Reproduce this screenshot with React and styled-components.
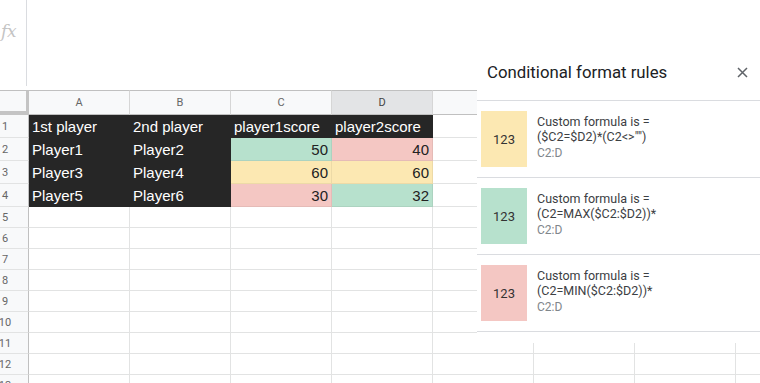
import React from "react";
import styled, { createGlobalStyle } from "styled-components";

const Global = createGlobalStyle`
  html, body { margin: 0; padding: 0; background: #fff; overflow: hidden; }
  body { width: 760px; height: 383px; font-family: "Liberation Sans", Arial, sans-serif; }
`;

const Page = styled.div`
  position: relative;
  width: 760px;
  height: 383px;
  overflow: hidden;
`;

const FormulaBar = styled.div`
  display: flex;
  height: 90px;
  margin-left: -18px;
`;

const FxBox = styled.div`
  width: 45px;
  height: 86px;
  border-right: 1px solid #dadce0;
  display: flex;
  align-items: flex-start;
  justify-content: flex-end;
  padding: 21px 10px 0 0;
  box-sizing: border-box;
  font-family: "DejaVu Serif", "Liberation Serif", serif;
  font-style: italic;
  font-size: 17px;
  color: #c4c4c4;
  letter-spacing: -0.5px;
`;

const Sheet = styled.div`
  display: grid;
  grid-template-columns: 47px repeat(8, 101px);
  grid-template-rows: 25px repeat(4, 23px) repeat(9, 21px);
  margin-left: -18px;
`;

const Corner = styled.div`
  box-sizing: border-box;
  background: #f8f9fa;
  border-top: 1px solid #c0c0c0;
  border-right: 4px solid #c4c4c4;
  border-bottom: 4px solid #c4c4c4;
  margin-right: -1px;
`;

const ColHead = styled.div`
  box-sizing: border-box;
  background: ${(p) => (p.$selected ? "#e3e4e6" : "#f8f9fa")};
  color: ${(p) => (p.$selected ? "#444" : "#666")};
  border-top: 1px solid #c0c0c0;
  border-bottom: 1px solid #c0c0c0;
  border-right: 1px solid #d6d6d6;
  font-family: Roboto, "Liberation Sans", sans-serif;
  font-size: 11px;
  display: flex;
  align-items: center;
  justify-content: center;
`;

const RowHead = styled.div`
  box-sizing: border-box;
  background: #f8f9fa;
  color: #666;
  border-right: 1px solid #c0c0c0;
  border-bottom: 1px solid #e2e3e3;
  font-family: Roboto, "Liberation Sans", sans-serif;
  font-size: 11px;
  display: flex;
  align-items: center;
  justify-content: center;
`;

const fills = {
  dark: "#262626",
  green: "#b7e1cd",
  yellow: "#fce8b2",
  red: "#f4c7c3",
};

const Cell = styled.div`
  box-sizing: border-box;
  background: ${(p) => (p.$fill ? fills[p.$fill] : "#fff")};
  color: ${(p) => (p.$fill === "dark" ? "#fff" : "#222")};
  border-right: 1px solid
    ${(p) => (p.$fill === "dark" ? fills.dark : p.$fill ? "rgba(0,0,0,0.06)" : "#e2e3e3")};
  border-bottom: 1px solid
    ${(p) => (p.$fill === "dark" ? fills.dark : p.$fill ? "rgba(0,0,0,0.06)" : "#e2e3e3")};
  font-family: "Liberation Sans", Arial, sans-serif;
  font-size: 15px;
  display: flex;
  align-items: flex-end;
  justify-content: ${(p) => (p.$num ? "flex-end" : "flex-start")};
  padding: 0 3px 2px 3px;
  white-space: nowrap;
  overflow: hidden;
`;

const Panel = styled.div`
  position: absolute;
  left: 477px;
  top: 50px;
  width: 283px;
  height: 293px;
  background: #fff;
  font-family: Roboto, "Liberation Sans", sans-serif;
`;

const PanelHeader = styled.div`
  box-sizing: border-box;
  height: 51px;
  border-bottom: 1px solid #dadce0;
  display: flex;
  align-items: center;
  justify-content: space-between;
  padding: 0 12px 6px 10px;
`;

const PanelTitle = styled.div`
  font-size: 16.8px;
  color: #202124;
`;

const CloseButton = styled.button`
  border: 0;
  background: none;
  padding: 0;
  width: 12px;
  height: 12px;
  display: flex;
  align-items: center;
  justify-content: center;
  cursor: pointer;
`;

const Rule = styled.div`
  box-sizing: border-box;
  height: 77px;
  border-bottom: 1px solid #dadce0;
  display: flex;
  align-items: flex-start;
  gap: 10px;
  padding: 10px 4px;
`;

const Swatch = styled.div`
  width: 46px;
  height: 56px;
  flex: none;
  background: ${(p) => fills[p.$fill]};
  color: #333;
  font-size: 13px;
  display: flex;
  align-items: center;
  justify-content: center;
`;

const RuleText = styled.div`
  display: flex;
  flex-direction: column;
  padding-top: 3px;
`;

const RuleLine = styled.div`
  font-size: 12.5px;
  line-height: 15px;
  color: #3c4043;
  white-space: nowrap;
`;

const RuleRange = styled.div`
  font-size: 12px;
  line-height: 13px;
  margin-top: 3px;
  color: #80868b;
`;

const cols = ["A", "B", "C", "D", "E", "F", "G", "H"];

const data = [
  [
    { v: "1st player", f: "dark" },
    { v: "2nd player", f: "dark" },
    { v: "player1score", f: "dark" },
    { v: "player2score", f: "dark" },
  ],
  [
    { v: "Player1", f: "dark" },
    { v: "Player2", f: "dark" },
    { v: "50", f: "green", n: true },
    { v: "40", f: "red", n: true },
  ],
  [
    { v: "Player3", f: "dark" },
    { v: "Player4", f: "dark" },
    { v: "60", f: "yellow", n: true },
    { v: "60", f: "yellow", n: true },
  ],
  [
    { v: "Player5", f: "dark" },
    { v: "Player6", f: "dark" },
    { v: "30", f: "red", n: true },
    { v: "32", f: "green", n: true },
  ],
];

const rules = [
  { fill: "yellow", formula: '($C2=$D2)*(C2<>"")' },
  { fill: "green", formula: "(C2=MAX($C2:$D2))*" },
  { fill: "red", formula: "(C2=MIN($C2:$D2))*" },
];

export default function App() {
  const rows = [];
  for (let r = 0; r < 13; r++) {
    const cells = [<RowHead key={`h${r}`}>{r + 1}</RowHead>];
    for (let c = 0; c < 8; c++) {
      const d = data[r] && data[r][c];
      cells.push(
        <Cell key={`${r}-${c}`} $fill={d ? d.f : null} $num={d && d.n}>
          {d ? d.v : ""}
        </Cell>
      );
    }
    rows.push(cells);
  }
  return (
    <Page>
      <Global />
      <FormulaBar>
        <FxBox>fx</FxBox>
      </FormulaBar>
      <Sheet>
        <Corner />
        {cols.map((c) => (
          <ColHead key={c} $selected={c === "D"}>
            {c}
          </ColHead>
        ))}
        {rows}
      </Sheet>
      <Panel>
        <PanelHeader>
          <PanelTitle>Conditional format rules</PanelTitle>
          <CloseButton aria-label="Close">
            <svg width="11" height="11" viewBox="0 0 11 11">
              <path d="M1 1L10 10M10 1L1 10" stroke="#5f6368" strokeWidth="1.5" fill="none" />
            </svg>
          </CloseButton>
        </PanelHeader>
        {rules.map((r, i) => (
          <Rule key={i}>
            <Swatch $fill={r.fill}>123</Swatch>
            <RuleText>
              <RuleLine>Custom formula is =</RuleLine>
              <RuleLine>{r.formula}</RuleLine>
              <RuleRange>C2:D</RuleRange>
            </RuleText>
          </Rule>
        ))}
      </Panel>
    </Page>
  );
}
